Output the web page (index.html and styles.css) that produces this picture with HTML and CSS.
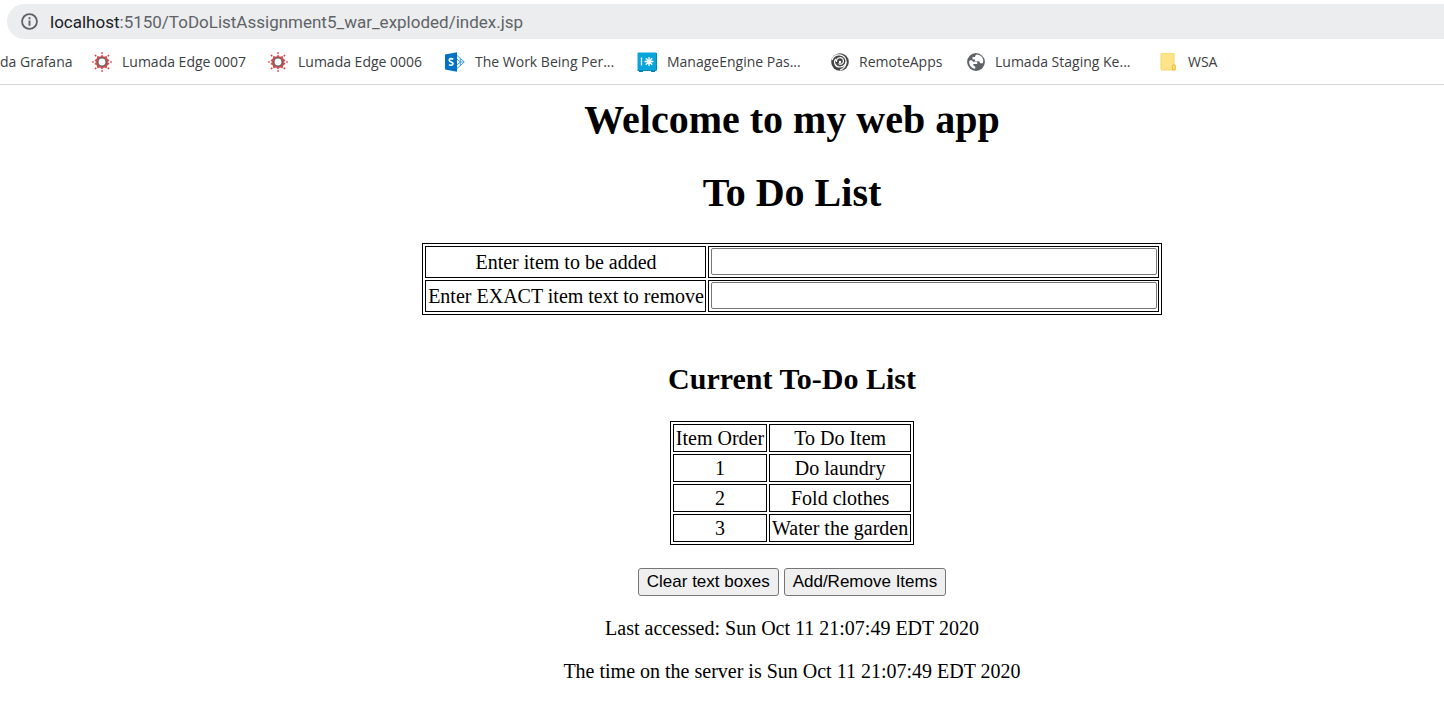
FILE: index.html
```
<!DOCTYPE html>
<html lang="en">
<head>
<meta charset="utf-8">
<title>To Do List</title>
<link rel="stylesheet" href="styles.css">
</head>
<body>
<header class="browser">
  <div class="address">
    <svg class="info" viewBox="0 0 16 16" aria-hidden="true"><circle cx="8" cy="8" r="7" fill="none" stroke="#5f6368" stroke-width="1.7"/><path d="M8 7v5M8 4v1.8" stroke="#5f6368" stroke-width="1.8"/></svg>
    <span class="url"><span class="host">localhost</span>:5150/ToDoListAssignment5_war_exploded/index.jsp</span>
  </div>
  <nav class="bookmarks">
    <a class="bookmark" href="#">da Grafana</a>
    <a class="bookmark" href="#">
      <svg class="icon" viewBox="0 0 20 20" aria-hidden="true"><path d="M10 2.800l1.800 2 2.900-.8.500 2.600 2.300 1.600L16 10l1.500 2-2.300 1.500-.5 2.700-2.900-.7-1.800 1.900-1.800-1.900-2.900.7-.5-2.700L2.500 12 4 10 2.500 8.200l2.300-1.600.5-2.600 2.900.8z" fill="#e04a4d"/><path d="M10 .2v1.500M10 18.300v1.500M.2 10h1.500M18.300 10h1.500M3 3l1.200 1.200M15.800 15.800L17 17M3 17l1.200-1.200M15.800 4.200L17 3" stroke="#d9363a" stroke-width="1.600"/><circle cx="10" cy="10" r="4.200" fill="#fff" stroke="#666" stroke-width="1.500"/></svg>Lumada Edge 0007</a>
    <a class="bookmark" href="#">
      <svg class="icon" viewBox="0 0 20 20" aria-hidden="true"><path d="M10 2.800l1.800 2 2.900-.8.500 2.600 2.300 1.600L16 10l1.500 2-2.300 1.500-.5 2.700-2.900-.7-1.800 1.900-1.800-1.900-2.900.7-.5-2.700L2.500 12 4 10 2.500 8.200l2.300-1.600.5-2.600 2.900.8z" fill="#e04a4d"/><path d="M10 .2v1.500M10 18.300v1.500M.2 10h1.500M18.300 10h1.500M3 3l1.200 1.200M15.800 15.800L17 17M3 17l1.200-1.200M15.800 4.200L17 3" stroke="#d9363a" stroke-width="1.600"/><circle cx="10" cy="10" r="4.200" fill="#fff" stroke="#666" stroke-width="1.500"/></svg>Lumada Edge 0006</a>
    <a class="bookmark" href="#">
      <svg class="icon" viewBox="0 0 20 20" aria-hidden="true"><path d="M12 3.500l7.300 6.500-7.300 6.500M12 7.200L15.500 10 12 12.800M15.500 10h3.500M15.300 6.500V13.500" fill="none" stroke="#4a9bd8" stroke-width="1"/><path d="M0 2.500L12 .3v19.400L0 17.500z" fill="#0072c6"/><path d="M8.300 7.200C6.500 6 4.300 6.500 4.300 8.200c0 2 3.700 1.500 3.700 3.500 0 1.800-2.500 1.900-4 .9" fill="none" stroke="#fff" stroke-width="1.700"/></svg>The Work Being Per...</a>
    <a class="bookmark" href="#">
      <svg class="icon" viewBox="0 0 20 20" aria-hidden="true"><path d="M2 17h4v3H2zM14 17h4v3h-4z" fill="#087cae"/><rect x=".5" y=".5" width="19" height="18" rx="1" fill="#09a4dc"/><path d="M.5 18.500h19M19.500 1v17" stroke="#0788b9"/><path d="M4.500 5.500v8M12 5v9M7.500 9.500h9M8.800 6.300l6.400 6.400M8.800 12.700l6.400-6.400" stroke="#fff" stroke-width="1.300"/></svg>ManageEngine Pas...</a>
    <a class="bookmark" href="#">
      <svg class="icon small" viewBox="0 1 18 18" aria-hidden="true"><circle cx="9" cy="10" r="8.800" fill="#454545"/><g fill="none" stroke="#fff" stroke-width="1.200"><path d="M1 8C3 2 11 1 14 6c3 5-1 9-5 9-5 0-7-5-4-8"/><path d="M5.500 10C5 5 12 4 12.500 9c0 3-3 4-5 2.500M15 10c0 4-3 7-6 8"/></g><circle cx="9" cy="10" r="1.200" fill="#fff"/></svg>RemoteApps</a>
    <a class="bookmark" href="#">
      <svg class="icon small" viewBox="0 1 18 18" aria-hidden="true"><circle cx="9" cy="10" r="8.900" fill="#5f6368"/><path d="M10 2.500c-1 0-2 1-2 2.500H5.500v2.500H8v1.800h3.500c1 0 1.500 1 1.500 2h2.800c1.600-3.500-.7-8.300-5.800-8.800zM2.200 9c-.5 4 2.300 7.500 6 7.800v-2.300c-1 0-2-1-2-2.500h4V9.800H6.500L4 8z" fill="#fff"/></svg>Lumada Staging Ke...</a>
    <a class="bookmark" href="#">
      <svg class="icon small" viewBox="0 1 18 18" aria-hidden="true"><path d="M1 2q0-1 1-1h11q1 0 1 1v10l1.500 2v4H2q-1 0-1-1z" fill="#ffe48a" stroke="#f5d568"/><path d="M12.500 18v-4q0-1.300 1.200-1.300T15 14v3.500z" fill="#ffe48a" stroke="#e9bd43"/></svg>WSA</a>
  </nav>
</header>
<main class="page">
  <h1>Welcome to my web app</h1>
  <h1>To Do List</h1>
  <form class="todo-form">
    <table class="entry">
      <tr><td><label for="add">Enter item to be added</label></td><td><input class="field" id="add" type="text"></td></tr>
      <tr><td><label for="remove">Enter EXACT item text to remove</label></td><td><input class="field" id="remove" type="text"></td></tr>
    </table>
    <h2>Current To-Do List</h2>
    <table class="items">
      <tr><td>Item Order</td><td>To Do Item</td></tr>
      <tr><td>1</td><td>Do laundry</td></tr>
      <tr><td>2</td><td>Fold clothes</td></tr>
      <tr><td>3</td><td>Water the garden</td></tr>
    </table>
    <div class="actions">
      <button type="reset">Clear text boxes</button>
      <button type="submit">Add/Remove Items</button>
    </div>
  </form>
  <p>Last accessed: Sun Oct 11 21:07:49 EDT 2020</p>
  <p>The time on the server is Sun Oct 11 21:07:49 EDT 2020</p>
</main>
</body>
</html>
```
FILE: styles.css
```
* { box-sizing: border-box; }
body {
  margin: 0;
  background: #fff;
  color: #000;
  font: 20px/24px "Liberation Serif", "Times New Roman", serif;
  overflow-x: hidden;
}
.browser {
  padding-top: 4px;
  border-bottom: 1px solid #d5d7da;
  font-family: "Open Sans", "Segoe UI", sans-serif;
}
.address {
  display: flex;
  align-items: center;
  gap: 12px;
  height: 35px;
  margin-left: 7px;
  padding-left: 14px;
  border-radius: 18px 0 0 18px;
  background: #ebedee;
  color: #5f6368;
  font-family: Roboto, "Segoe UI", sans-serif;
  font-size: 17px;
}
.info { width: 17px; height: 17px; }
.host { color: #202124; }
.bookmarks {
  display: grid;
  grid-template-columns: 92px 176px 177px 192px 194px 136px 193px auto;
  align-items: center;
  height: 45px;
  font-size: 14px;
}
.bookmark {
  display: flex;
  align-items: center;
  gap: 10px;
  color: #3c4043;
  text-decoration: none;
  white-space: nowrap;
}
.icon { width: 20px; height: 20px; }
.icon.small { width: 18px; height: 18px; }
.page {
  padding: 12px 0 20px 140px;
  text-align: center;
}
h1 {
  margin: 0 0 27px;
  font-size: 40px;
  line-height: 46px;
}
h2 {
  margin: 46px 0 24px;
  font-size: 30px;
  line-height: 36px;
}
table {
  margin: 0 auto;
  border: 1px solid #000;
  border-spacing: 2px;
  line-height: 22px;
}
td {
  padding: 2px;
  border: 1px solid #000;
}
.entry td { padding: 1px 1px 2px 2px; }
.field {
  display: block;
  width: 446px;
  height: 27px;
  padding: 1px 4px;
  border: 1px solid #767676;
  border-radius: 2px;
  background: #fff;
  font: 17px "Liberation Sans", Arial, sans-serif;
}
.actions {
  display: flex;
  justify-content: center;
  gap: 5px;
  margin: 23px 0 20px;
}
button {
  height: 28px;
  padding: 1px 8px;
  border: 1px solid #767676;
  border-radius: 3px;
  background: #efefef;
  color: #000;
  font: 17px "Liberation Sans", Arial, sans-serif;
}
p { margin: 19px 0; }
```
